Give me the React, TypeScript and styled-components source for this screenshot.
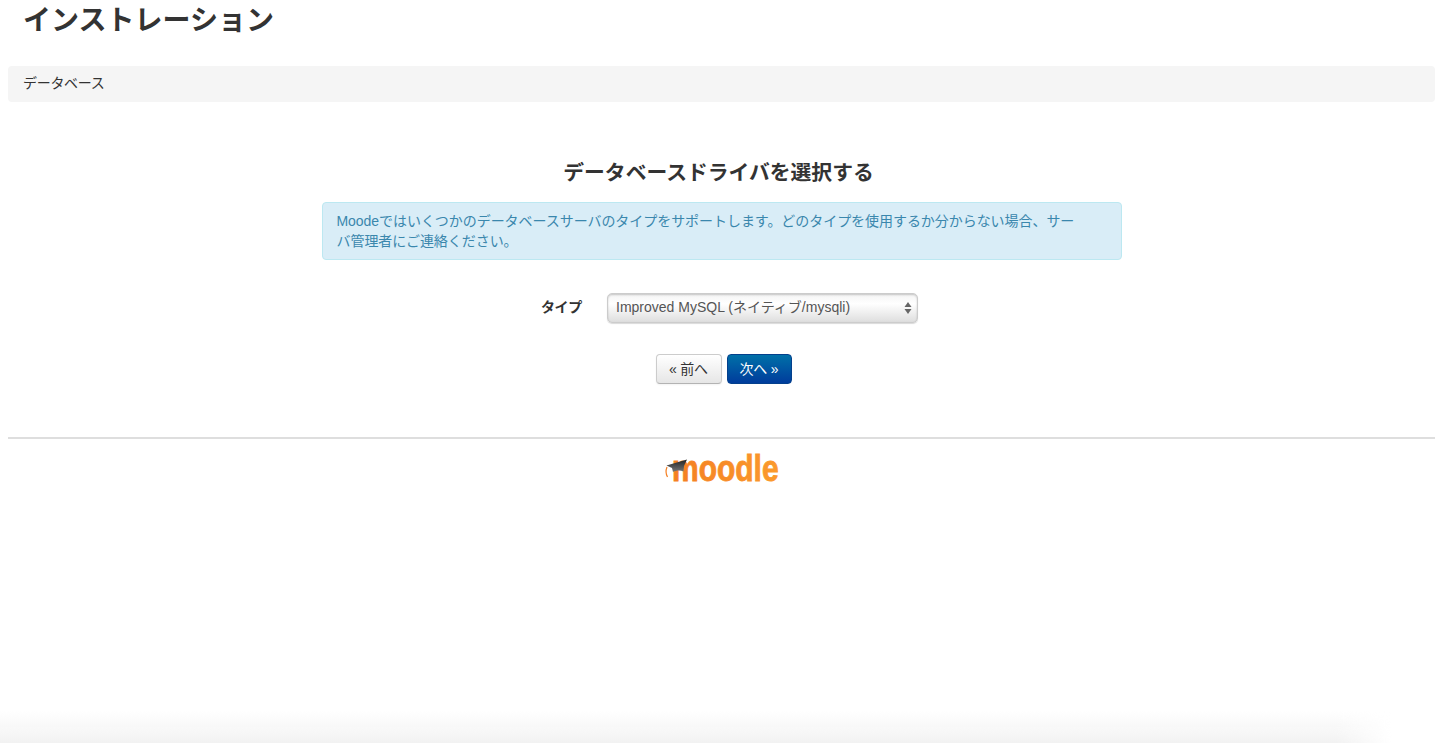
import styled, { createGlobalStyle } from "styled-components";

const FONT = `"Liberation Sans", "Noto Sans CJK JP", sans-serif`;

const Global = createGlobalStyle`
  html, body {
    margin: 0;
    background: #fff;
    overflow: hidden;
  }
  body {
    padding: 0 4px 0 8px;
    font-family: ${FONT};
    font-size: 14px;
    color: #333;
  }
`;

export default function App() {
  return (
    <>
      <Global />
      <Header>インストレーション</Header>
      <Breadcrumb>データベース</Breadcrumb>
      <Main>
        <Title>データベースドライバを選択する</Title>
        <InfoBox>
          Moodeではいくつかのデータベースサーバのタイプをサポートします。どのタイプを使用するか分からない場合、サーバ管理者にご連絡ください。
        </InfoBox>
        <FormRow>
          <FieldLabel>タイプ</FieldLabel>
          <SelectBox>
            <SelectValue>Improved MySQL (ネイティブ/mysqli)</SelectValue>
            <SelectArrows width="8" height="14" viewBox="0 0 8 14">
              <path d="M4 1 7.5 6H.5z" />
              <path d="M4 13 .5 8h7z" />
            </SelectArrows>
          </SelectBox>
        </FormRow>
        <Buttons>
          <PrevButton type="button">« 前へ</PrevButton>
          <NextButton type="button">次へ »</NextButton>
        </Buttons>
      </Main>
      <Footer>
        <MoodleLogo />
      </Footer>
      <BottomFade />
    </>
  );
}

function MoodleLogo() {
  return (
    <svg width="120" height="46" viewBox="0 -5 120 46">
      <defs>
        <linearGradient id="moodleOrange" x1="0" x2="1" y1="0" y2="0">
          <stop offset="0" stopColor="#f47f22" />
          <stop offset="1" stopColor="#fb9a2d" />
        </linearGradient>
        <linearGradient id="moodleHat" x1="0" x2="0" y1="0" y2="1">
          <stop offset="0" stopColor="#222" />
          <stop offset="1" stopColor="#777" />
        </linearGradient>
      </defs>
      <LogoText transform="translate(10 31) scale(1 1.2)" fill="url(#moodleOrange)" stroke="url(#moodleOrange)" strokeWidth="0.7">
        moodle
      </LogoText>
      <path d="M4.5 15.5 25 9.5 22 16 21.5 21.5C18 20 14 20.5 11 22L10 18z" fill="url(#moodleHat)" />
      <path d="M5 17C3.8 20 3.8 24 5.5 27" stroke="#f47f22" strokeWidth="1.2" fill="none" />
    </svg>
  );
}

const Header = styled.h1`
  margin: 0;
  padding: 3px 15px 0;
  height: 66px;
  box-sizing: border-box;
  font-size: 28px;
  line-height: 36px;
  font-weight: 700;
  color: #333;
`;

const Breadcrumb = styled.nav`
  box-sizing: border-box;
  height: 36px;
  padding: 0 15px 4px;
  display: flex;
  align-items: center;
  background: #f5f5f5;
  border-radius: 4px;
  font-size: 14px;
  letter-spacing: -0.3px;
  color: #333;
`;

const Main = styled.main`
  display: flex;
  flex-direction: column;
  align-items: center;
  padding-top: 56px;
`;

const Title = styled.h2`
  margin: 0 6px 14px 0;
  font-size: 20.8px;
  line-height: 30px;
  font-weight: 700;
  color: #333;
`;

const InfoBox = styled.div`
  box-sizing: border-box;
  width: 800px;
  height: 58px;
  padding: 8px 40px 8px 14px;
  background: #d9edf7;
  border: 1px solid #bce8f1;
  border-radius: 4px;
  font-size: 14px;
  letter-spacing: -0.05px;
  line-height: 20px;
  color: #3a87ad;
`;

const FormRow = styled.div`
  display: flex;
  align-items: center;
  margin-top: 33px;
  margin-left: 16px;
  height: 30px;
`;

const FieldLabel = styled.label`
  width: 66px;
  padding-bottom: 4px;
  font-size: 14px;
  letter-spacing: -0.4px;
  font-weight: 700;
  color: #333;
`;

const SelectBox = styled.div`
  box-sizing: border-box;
  width: 311px;
  height: 30px;
  padding: 0 5px 0 8px;
  display: flex;
  align-items: center;
  justify-content: space-between;
  border: 1px solid #ccc;
  border-radius: 5px;
  background: linear-gradient(#f4f4f4 0%, #fff 35%, #dedede 100%);
  box-shadow: 0 1px 1px rgba(0, 0, 0, 0.15), inset 0 1px 2px rgba(0, 0, 0, 0.2);
  font-size: 14px;
  color: #555;
`;

const SelectValue = styled.span`
  padding-bottom: 4px;
`;

const SelectArrows = styled.svg`
  fill: #666;
`;

const Buttons = styled.div`
  display: flex;
  gap: 5px;
  margin-top: 31px;
  margin-left: 4px;
`;

const PrevButton = styled.button`
  box-sizing: border-box;
  width: 66px;
  height: 30px;
  padding: 0 0 2px;
  font-family: ${FONT};
  font-size: 14px;
  letter-spacing: -0.2px;
  color: #333;
  border: 1px solid #ccc;
  border-bottom-color: #b3b3b3;
  border-radius: 4px;
  background: linear-gradient(#fff, #e6e6e6);
  box-shadow: 0 1px 2px rgba(0, 0, 0, 0.05);
`;

const NextButton = styled.button`
  box-sizing: border-box;
  width: 65px;
  height: 30px;
  padding: 0 0 2px;
  font-family: ${FONT};
  font-size: 14px;
  letter-spacing: -0.2px;
  color: #fff;
  border: 1px solid #04408c;
  border-radius: 4px;
  background: linear-gradient(#0070a8, #003c9c);
`;

const Footer = styled.footer`
  margin-top: 53px;
  border-top: 2px solid #dedede;
  display: flex;
  justify-content: center;
  padding-top: 6px;
`;

const LogoText = styled.text`
  font-family: ${FONT};
  font-size: 30px;
  font-weight: 700;
`;

const BottomFade = styled.div`
  position: fixed;
  left: 0;
  bottom: 0;
  width: 1392px;
  height: 32px;
  background: linear-gradient(rgba(243, 243, 243, 0), #f2f2f2);
  -webkit-mask-image: linear-gradient(to right, #000 96%, transparent);
  mask-image: linear-gradient(to right, #000 96%, transparent);
`;
